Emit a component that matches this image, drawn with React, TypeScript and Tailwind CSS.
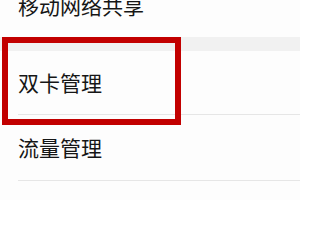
export default function App() {
  const font = { fontFamily: '"Noto Sans CJK SC", "Noto Sans", sans-serif' }

  return (
    <div className="relative w-[300px] h-[200px] overflow-hidden bg-[#fdfdfd]" style={font}>
      {/* top item, cut off */}
      <div className="h-[64px] -mt-[27px] flex items-center pl-[18px]">
        <span className="text-[21px] leading-none text-[#161616]">移动网络共享</span>
      </div>

      {/* section gap */}
      <div className="h-[14px] bg-[#f1f1f1]" />

      <div className="pl-[18px]">
        <div className="h-[64px] flex items-center border-b border-[#e6e6e6]">
          <span className="text-[21px] leading-none text-[#161616]">双卡管理</span>
        </div>
        <div className="h-[66px] flex items-center border-b border-[#e6e6e6]">
          <span className="text-[21px] leading-none text-[#161616]">流量管理</span>
        </div>
      </div>

      {/* highlight box */}
      <div className="absolute left-[2px] top-[37px] w-[179px] h-[88px] border-[6px] border-[#c20000]" />
    </div>
  )
}
